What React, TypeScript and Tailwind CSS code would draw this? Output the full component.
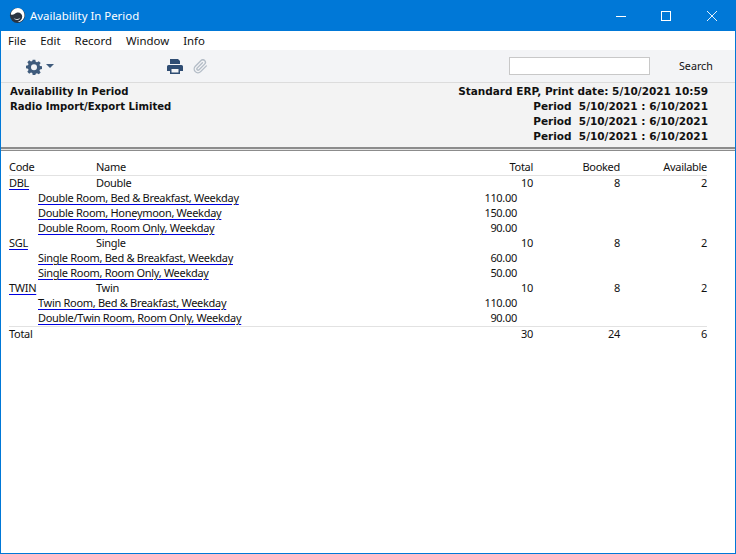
const rooms = [
  {
    code: "DBL", name: "Double", total: 10, booked: 8, available: 2,
    rates: [
      { label: "Double Room, Bed & Breakfast, Weekday", price: "110.00" },
      { label: "Double Room, Honeymoon, Weekday", price: "150.00" },
      { label: "Double Room, Room Only, Weekday", price: "90.00" },
    ],
  },
  {
    code: "SGL", name: "Single", total: 10, booked: 8, available: 2,
    rates: [
      { label: "Single Room, Bed & Breakfast, Weekday", price: "60.00" },
      { label: "Single Room, Room Only, Weekday", price: "50.00" },
    ],
  },
  {
    code: "TWIN", name: "Twin", total: 10, booked: 8, available: 2,
    rates: [
      { label: "Twin Room, Bed & Breakfast, Weekday", price: "110.00" },
      { label: "Double/Twin Room, Room Only, Weekday", price: "90.00" },
    ],
  },
];

function Link({ children }: { children: React.ReactNode }) {
  return <span className="underline decoration-[#0000e0] underline-offset-[2px]">{children}</span>;
}

export default function App() {
  return (
    <div className="w-[736px] h-[554px] flex flex-col bg-white border border-t-0 border-[#0078d7] text-[11px] tracking-[-0.3px] text-[#111] overflow-hidden font-['Noto_Sans','Open_Sans',sans-serif]">
      {/* Title bar */}
      <div className="h-[31px] shrink-0 -mx-px bg-[#0078d7] flex items-center text-white">
        <svg viewBox="0 0 18 18" className="w-[17px] h-[17px] ml-[9px]">
          <circle cx="9" cy="9" r="8" fill="#2a3442" />
          <path d="M2 8C2 3 8-1 13 2c3 2 4 6 3 9-1 3-4 5-7 5 3-1 5-3 5-6 0-3-3-5-6-4-2 .5-3 3-6 2z" fill="#fff" />
          <path d="M5 12c2 1 5 1 7-1-1 3-5 4-7 1z" fill="#cfd6de" />
        </svg>
        <span className="ml-[4px] text-[11.4px] tracking-normal">Availability In Period</span>
        <div className="ml-auto flex items-center h-full">
          <svg viewBox="0 0 10 10" className="w-[10px] h-[10px] mr-[35px]" stroke="white" fill="none">
            <path d="M0 5.5h10" />
          </svg>
          <svg viewBox="0 0 10 10" className="w-[10px] h-[10px] mr-[36px]" stroke="white" fill="none">
            <rect x="0.5" y="0.5" width="9" height="9" />
          </svg>
          <svg viewBox="0 0 10 10" className="w-[10px] h-[10px] mr-[19px]" stroke="white" fill="none" strokeWidth="0.9">
            <path d="M0 0l10 10M10 0L0 10" />
          </svg>
        </div>
      </div>

      {/* Menu */}
      <div className="h-[19px] shrink-0 flex items-center pl-[7px] gap-[14px] text-[11.4px] tracking-normal">
        <span>File</span>
        <span>Edit</span>
        <span>Record</span>
        <span>Window</span>
        <span>Info</span>
      </div>

      {/* Toolbar */}
      <div className="h-[33px] shrink-0 bg-[#f3f4f6] border-b border-[#dcdcdc] flex items-center">
        <svg viewBox="0 0 24 24" className="w-[16px] h-[16px] ml-[25px] mt-[1px]" fill="#3f5b7c">
          <path
            fillRule="evenodd"
            d="M10 1h4l.6 3.2 1.9.8L19.2 3.2 22 6l-1.8 2.7.8 1.9L24 11v4l-3 .6-.8 1.9 1.8 2.7-2.8 2.8-2.7-1.8-1.9.8L14 24h-4l-.6-3-1.9-.8-2.7 1.8L2 19.2l1.8-2.7-.8-1.9L0 14v-4l3-.6.8-1.9L2 4.8 4.8 2l2.7 1.8 1.9-.8zM12 8a4.5 4.5 0 1 0 0 9 4.5 4.5 0 0 0 0-9z"
          />
        </svg>
        <span className="ml-[4px] w-0 h-0 border-x-[4px] border-x-transparent border-t-[4px] border-t-[#3f5b7c]" />
        <svg viewBox="0 0 16 15" className="w-[16px] h-[15px] ml-[113px]" fill="#2f4d73">
          <path d="M3 0h8l2 2v3H3z" />
          <path fillRule="evenodd" d="M1.5 6h13A1.5 1.5 0 0 1 16 7.5V12h-3v3H3v-3H0V7.5A1.5 1.5 0 0 1 1.5 6zM4.5 10v3.5h7V10z" />
        </svg>
        <svg viewBox="0 0 24 24" className="w-[15px] h-[15px] ml-[10px]" fill="none" stroke="#b4bdc7" strokeWidth="2.2" strokeLinecap="round">
          <path d="M21.4 11 12.2 20.2a6 6 0 0 1-8.5-8.5l9.2-9.2a4 4 0 0 1 5.7 5.7l-9.2 9.2a2 2 0 0 1-2.8-2.8l8.5-8.5" />
        </svg>
        <div className="ml-[301px] w-[141px] h-[18px] bg-white border border-[#c8c8c8]" />
        <span className="ml-[29px] mt-[1px] tracking-normal text-[10.7px]">Search</span>
      </div>

      {/* Report header */}
      <div className="h-[64px] shrink-0 bg-[#f3f3f3] flex justify-between pt-px pl-[9px] pr-[27px] font-['DejaVu_Sans',sans-serif] font-bold tracking-normal leading-[15px]">
        <div className="text-[10.1px]">
          <div>Availability In Period</div>
          <div>Radio Import/Export Limited</div>
        </div>
        <div className="text-right whitespace-pre text-[10.5px]">
          <div>Standard ERP, Print date: 5/10/2021 10:59</div>
          <div>Period  5/10/2021 : 6/10/2021</div>
          <div>Period  5/10/2021 : 6/10/2021</div>
          <div>Period  5/10/2021 : 6/10/2021</div>
        </div>
      </div>
      <div className="h-[4px] shrink-0 border-t-2 border-b border-t-[#8c8c8c] border-b-[#8c8c8c] bg-[#e4e4e4]" />

      {/* Report body */}
      <div className="pt-[8px] pl-[8px] pr-[28px] leading-[15px]">
        <div className="flex h-[17px] border-b border-[#e2e2e2]">
          <span className="w-[87px]">Code</span>
          <span className="flex-1">Name</span>
          <span className="w-[87px] text-right">Total</span>
          <span className="w-[87px] text-right">Booked</span>
          <span className="w-[87px] text-right">Available</span>
        </div>
        <div className="-mt-px">
          {rooms.map((room) => (
            <div key={room.code}>
              <div className="flex h-[15px]">
                <span className="w-[87px]"><Link>{room.code}</Link></span>
                <span className="flex-1">{room.name}</span>
                <span className="w-[87px] text-right">{room.total}</span>
                <span className="w-[87px] text-right">{room.booked}</span>
                <span className="w-[87px] text-right">{room.available}</span>
              </div>
              {room.rates.map((rate) => (
                <div key={rate.label} className="flex h-[15px] pl-[29px]">
                  <span className="flex-1"><Link>{rate.label}</Link></span>
                  <span className="mr-[190px] text-right">{rate.price}</span>
                </div>
              ))}
            </div>
          ))}
        </div>
        <div className="flex h-[15px] mt-px border-t border-[#e2e2e2] leading-[13px]">
          <span className="flex-1">Total</span>
          <span className="w-[87px] text-right">30</span>
          <span className="w-[87px] text-right">24</span>
          <span className="w-[87px] text-right">6</span>
        </div>
      </div>
    </div>
  );
}
